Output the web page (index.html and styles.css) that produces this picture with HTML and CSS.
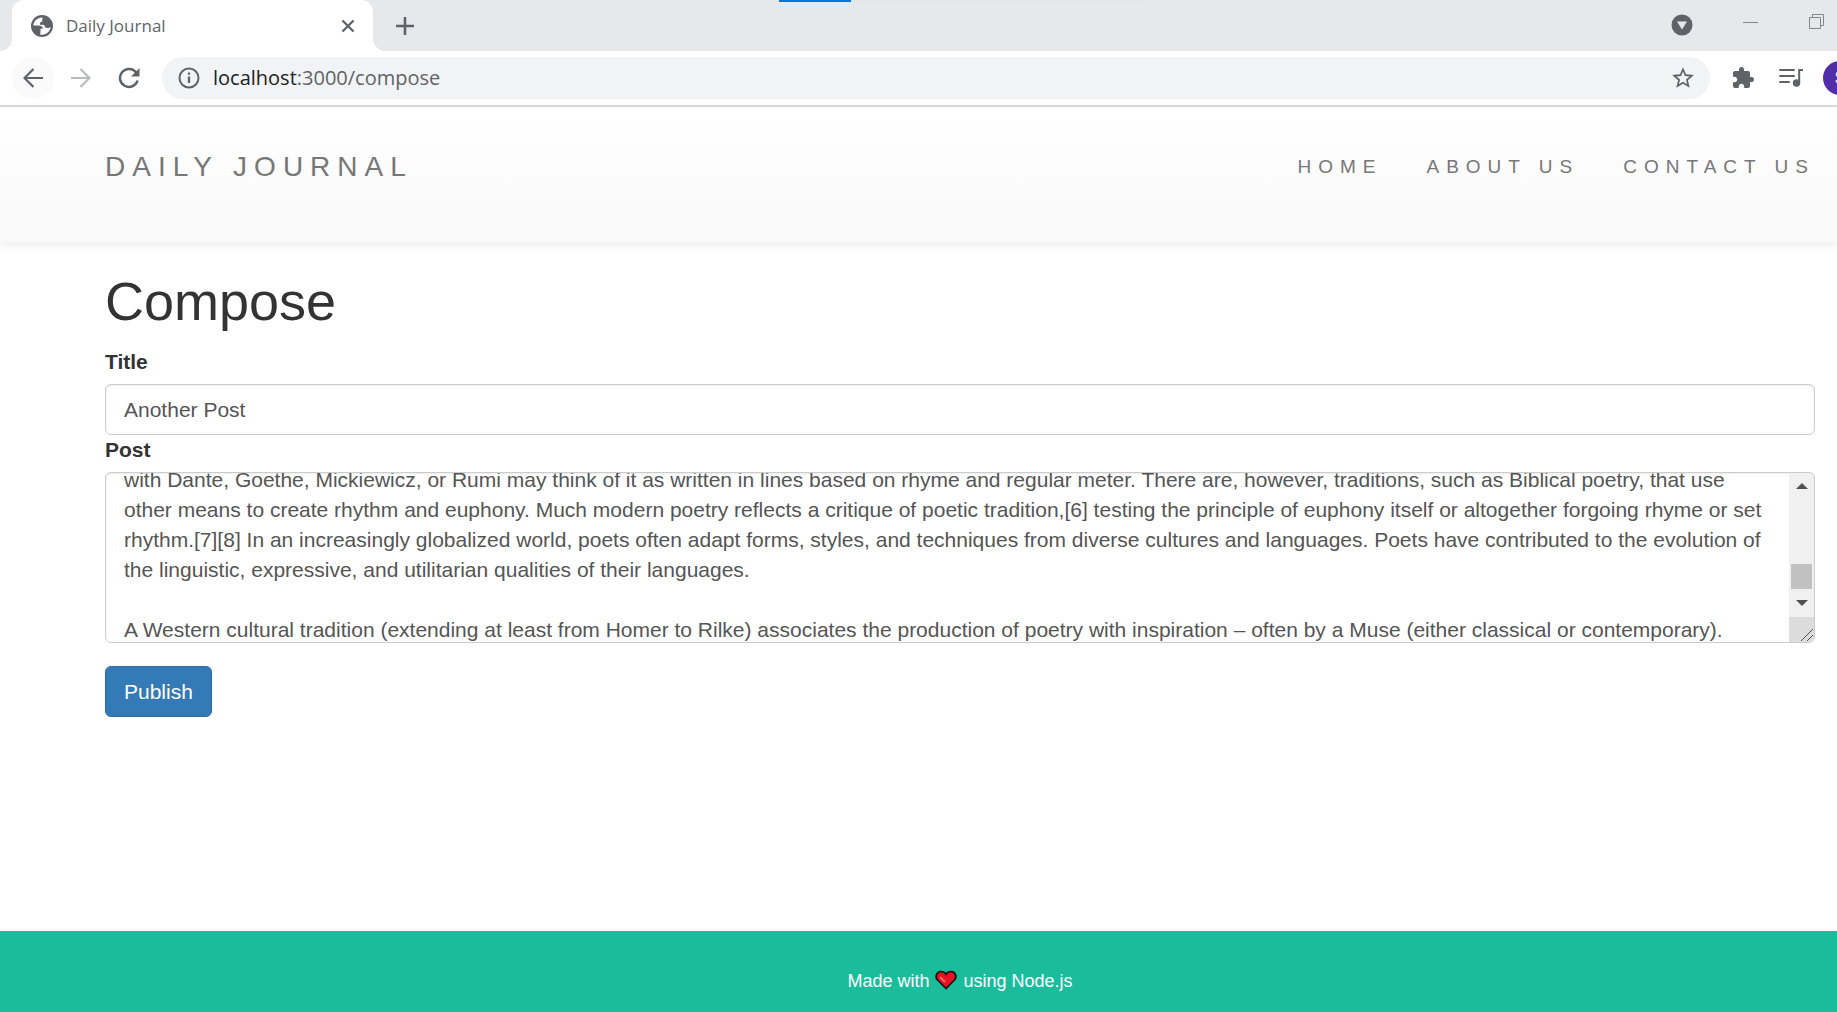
FILE: index.html
```html
<!DOCTYPE html>
<html lang="en">
<head>
<meta charset="utf-8">
<meta name="viewport" content="width=device-width, initial-scale=1">
<title>Daily Journal</title>
<link rel="stylesheet" href="styles.css">
</head>
<body>
<div class="window">
  <div class="tab-strip">
    <div class="load-bar"></div>
    <div class="tab">
      <svg class="globe" viewBox="0 0 22 22" width="22" height="22" aria-hidden="true"><circle cx="11" cy="11" r="11" fill="#5f6368"/><path d="M11.500 2.400C6.500 2.200 2.600 6 2.400 10.400l5.100.1c2.500 0 4.300 1.200 4.500 3.300H9.500v3.300l-.4 2.300c5 1.200 9.900-2 10.500-7.400-1 .9-2.200 1-3.300.9-2-.1-2.800-1.400-2.900-3L9 9.700C8.600 7.900 9.400 6.700 11.200 6.400z" fill="#fff"/></svg>
      <span class="tab-title">Daily Journal</span>
      <button class="icon-btn" type="button" aria-label="Close tab"><svg viewBox="0 0 14 14" width="14" height="14"><path d="M1.500 1.500l11 11M12.500 1.500l-11 11" stroke="#5f6368" stroke-width="2.300"/></svg></button>
    </div>
    <button class="icon-btn new-tab" type="button" aria-label="New tab"><svg viewBox="0 0 18 18" width="18" height="18"><path d="M9 0v18M0 9h18" stroke="#5f6368" stroke-width="2.600"/></svg></button>
    <div class="window-controls">
      <button class="icon-btn tab-search" type="button" aria-label="Search tabs"><svg viewBox="0 0 22 22" width="22" height="22"><circle cx="11" cy="11" r="10.500" fill="#5f6368"/><path d="M6 7.500h10l-5 8z" fill="#e5e9ec"/></svg></button>
      <button class="icon-btn" type="button" aria-label="Minimize"><svg viewBox="0 0 16 16" width="16" height="16"><path d="M0 8.500h15" stroke="#85888a"/></svg></button>
      <button class="icon-btn" type="button" aria-label="Restore"><svg viewBox="0 0 16 16" width="16" height="16"><path d="M.5 3.500h11v11H.500zM3.500 3.500v-3h11v11h-3" fill="none" stroke="#85888a"/></svg></button>
    </div>
  </div>

  <div class="toolbar">
    <button class="icon-btn nav-btn back" type="button" aria-label="Back"><svg viewBox="0 0 20 20" width="20" height="20"><path d="M20 10H2M10.500 1L1.500 10l9 9" fill="none" stroke="#5f6368" stroke-width="2.200"/></svg></button>
    <button class="icon-btn nav-btn" type="button" aria-label="Forward"><svg viewBox="0 0 20 20" width="20" height="20"><path d="M0 10h18M9.500 1l9 9-9 9" fill="none" stroke="#babcbe" stroke-width="2.200"/></svg></button>
    <button class="icon-btn nav-btn" type="button" aria-label="Reload"><svg viewBox="0 0 22 22" width="22" height="22"><path d="M18.200 5.500A9 9 0 1 0 19.600 13.500" fill="none" stroke="#5f6368" stroke-width="2.500"/><path d="M21.500 1v8.500H13z" fill="#5f6368"/></svg></button>
    <div class="address">
      <svg viewBox="0 0 22 22" width="22" height="22" aria-hidden="true"><circle cx="11" cy="11" r="9.500" fill="none" stroke="#5f6368" stroke-width="2"/><path d="M11 9.500V16M11 5.500v2.300" stroke="#5f6368" stroke-width="2.300"/></svg>
      <span class="url"><span class="host">localhost</span>:3000/compose</span>
      <button class="icon-btn" type="button" aria-label="Bookmark this page"><svg viewBox="0 0 24 24" width="26" height="26"><path d="M22 9.240l-7.190-.62L12 2 9.190 8.630 2 9.240l5.460 4.730L5.820 21 12 17.270 18.180 21l-1.630-7.030L22 9.240zM12 15.400l-3.760 2.270 1-4.280-3.320-2.880 4.380-.38L12 6.100l1.710 4.040 4.380.38-3.320 2.880 1 4.280L12 15.400z" fill="#5f6368"/></svg></button>
    </div>
    <button class="icon-btn" type="button" aria-label="Extensions"><svg viewBox="0 0 24 24" width="24" height="24"><path d="M20.500 11H19V7c0-1.100-.9-2-2-2h-4V3.500a2.500 2.500 0 0 0-5 0V5H4c-1.100 0-1.990.9-1.990 2v3.800H3.500c1.490 0 2.700 1.210 2.700 2.700s-1.210 2.700-2.700 2.700H2V20c0 1.100.9 2 2 2h3.800v-1.500c0-1.490 1.210-2.700 2.700-2.700s2.700 1.210 2.700 2.700V22H17c1.100 0 2-.9 2-2v-4h1.500a2.500 2.500 0 0 0 0-5z" fill="#5f6368"/></svg></button>
    <button class="icon-btn" type="button" aria-label="Media controls"><svg viewBox="0 0 25 20" width="25" height="20"><path d="M1 2h14M1 8h14M1 14h9" stroke="#5f6368" stroke-width="2" stroke-linecap="round"/><circle cx="17.500" cy="15" r="3.700" fill="#5f6368"/><path d="M20.200 15V2H24" fill="none" stroke="#5f6368" stroke-width="2"/></svg></button>
    <button class="avatar" type="button" aria-label="Profile">S</button>
  </div>

  <header class="site-header">
    <a class="brand" href="#">DAILY JOURNAL</a>
    <nav class="site-nav">
      <a href="#">HOME</a>
      <a href="#">ABOUT US</a>
      <a href="#">CONTACT US</a>
    </nav>
  </header>

  <main class="content">
    <h1>Compose</h1>
    <form class="compose">
      <label for="post-title">Title</label>
      <input class="field" id="post-title" type="text" value="Another Post">
      <label for="post-body">Post</label>
      <div class="post-box">
        <textarea class="field post-body" id="post-body" spellcheck="false">with Dante, Goethe, Mickiewicz, or Rumi may think of it as written in lines based on rhyme and regular meter. There are, however, traditions, such as Biblical poetry, that use other means to create rhythm and euphony. Much modern poetry reflects a critique of poetic tradition,[6] testing the principle of euphony itself or altogether forgoing rhyme or set rhythm.[7][8] In an increasingly globalized world, poets often adapt forms, styles, and techniques from diverse cultures and languages. Poets have contributed to the evolution of the linguistic, expressive, and utilitarian qualities of their languages.

A Western cultural tradition (extending at least from Homer to Rilke) associates the production of poetry with inspiration – often by a Muse (either classical or contemporary).</textarea>
        <div class="scrollbar" aria-hidden="true">
          <svg viewBox="0 0 12 6" width="12" height="6"><path d="M0 6l6-6 6 6z" fill="#505050"/></svg>
          <span class="thumb"></span>
          <svg viewBox="0 0 12 6" width="12" height="6"><path d="M0 0l6 6 6-6z" fill="#505050"/></svg>
          <svg class="grip" viewBox="0 0 25 25" width="25" height="25"><path d="M0 0h25v25H0z" fill="#dcdcdc"/><path d="M12 24l12-12M18 24l6-6" stroke="#505050"/></svg>
        </div>
      </div>
      <button class="publish" type="button">Publish</button>
    </form>
  </main>

  <footer class="site-footer">
    <p>Made with
      <svg class="heart" viewBox="0 0 22 20" width="22" height="20" role="img" aria-label="love"><path d="M11 18.500L2.500 10C-.5 6.500 2 1.500 6 1.500c2.200 0 4 1 5 2.800 1-1.800 2.800-2.800 5-2.800 4 0 6.500 5 3.500 8.500z" fill="#e81123" stroke="#111" stroke-width="1.700"/><path d="M5 7l5 5" stroke="#f4705f" stroke-width="2"/></svg>
      using Node.js</p>
  </footer>
</div>
<script src="script.js"></script>
</body>
</html>
```
FILE: styles.css
```css
* {
  box-sizing: border-box;
}

body {
  margin: 0;
  background: #fff;
  color: #333;
  font: 21px/30px "Liberation Sans", Arial, sans-serif;
}

button,
input,
textarea {
  font: inherit;
}

.window {
  display: flex;
  flex-direction: column;
  min-height: 100vh;
  overflow: hidden;
}

.icon-btn {
  display: flex;
  flex: none;
  align-items: center;
  justify-content: center;
  padding: 0;
  border: 0;
  background: none;
}

/* Tab strip */
.tab-strip {
  position: relative;
  display: flex;
  height: 51px;
  padding: 0 12px;
  background: #e5e9ec;
}

.load-bar {
  position: absolute;
  top: 0;
  left: 779px;
  width: 362px;
  height: 2px;
  background: linear-gradient(90deg, #0078d7 72px, #e5e5e5 72px);
}

.tab {
  position: relative;
  display: flex;
  align-items: center;
  width: 361px;
  padding: 0 18px 0 19px;
  border-radius: 12px 12px 0 0;
  background: #fff;
}

.tab::before,
.tab::after {
  content: "";
  position: absolute;
  bottom: 0;
  width: 12px;
  height: 12px;
}

.tab::before {
  right: 100%;
  background: radial-gradient(circle at 0 0, transparent 12px, #fff 12px);
}

.tab::after {
  left: 100%;
  background: radial-gradient(circle at 100% 0, transparent 12px, #fff 12px);
}

.tab-title {
  flex: 1;
  margin-left: 13px;
  color: #5f6368;
  font: 17px/24px "Open Sans", "Noto Sans", sans-serif;
}

.new-tab {
  margin-left: 23px;
}

.window-controls {
  display: flex;
  align-items: center;
  margin-left: auto;
  padding-bottom: 8px;
  gap: 50px;
}

.tab-search {
  margin-top: 7px;
}

/* Toolbar */
.toolbar {
  display: flex;
  align-items: center;
  height: 56px;
  padding-left: 12px;
  border-bottom: 2px solid #dadce0;
  background: #fff;
}

.nav-btn {
  width: 42px;
  height: 42px;
  margin-right: 6px;
  border-radius: 50%;
}

.back {
  background: #fafafa;
}

.address {
  display: flex;
  flex: 1;
  align-items: center;
  height: 42px;
  margin-right: 21px;
  margin-left: 6px;
  padding: 0 14px 0 16px;
  border-radius: 21px;
  background: #f1f3f4;
}

.url {
  flex: 1;
  margin-left: 13px;
  color: #5f6368;
  font: 20px/30px "Open Sans", "Noto Sans", sans-serif;
}

.host {
  color: #202124;
}

.toolbar > .icon-btn + .icon-btn:not(.nav-btn) {
  margin-left: 24px;
}

.avatar {
  flex: none;
  width: 34px;
  height: 34px;
  margin-right: -20px;
  margin-left: 19px;
  padding: 0;
  border: 0;
  border-radius: 50%;
  background: #512da8;
  color: #fff;
  font: 18px/34px Roboto, sans-serif;
}

/* Site header */
.site-header {
  display: flex;
  align-items: flex-start;
  justify-content: space-between;
  height: 136px;
  padding: 45px 22px 0 105px;
  background: linear-gradient(#fff, #f8f8f8);
  box-shadow: 0 2px 8px rgba(0, 0, 0, 0.08);
}

.site-header a {
  color: #777;
  text-decoration: none;
}

.brand {
  font-size: 28px;
  letter-spacing: 7px;
}

.site-nav {
  display: flex;
  gap: 44px;
  font-size: 19px;
  letter-spacing: 7px;
}

/* Compose form */
.content {
  flex: 1;
  padding: 29px 22px 0 105px;
}

h1 {
  margin: 0 0 16px;
  font-size: 54px;
  font-weight: 500;
  line-height: 59px;
}

.compose label {
  display: block;
  margin-bottom: 7px;
  font-weight: 700;
}

.field {
  display: block;
  width: 100%;
  height: 51px;
  padding: 9px 18px;
  border: 1px solid #ccc;
  border-radius: 6px;
  background: #fff;
  box-shadow: inset 0 1px 2px rgba(0, 0, 0, 0.08);
  color: #555;
}

.post-box {
  position: relative;
}

.post-body {
  height: 171px;
  padding-right: 43px;
  overflow: hidden;
  resize: none;
}

.scrollbar {
  position: absolute;
  top: 2px;
  right: 1px;
  bottom: 1px;
  display: flex;
  flex-direction: column;
  align-items: center;
  width: 25px;
  padding-top: 9px;
  border-radius: 0 5px 5px 0;
  background: #f0f0f0;
  overflow: hidden;
}

.thumb {
  width: 21px;
  height: 25px;
  margin: 75px 0 11px;
  background: #c1c1c1;
}

.grip {
  margin-top: auto;
}

.publish {
  margin-top: 23px;
  padding: 9px 18px;
  border: 1px solid #2e6da4;
  border-radius: 6px;
  background: #337ab7;
  color: #fff;
  line-height: 31px;
}

/* Footer */
.site-footer {
  height: 81px;
  padding: 35px 22px 0 105px;
  background: #1abc9c;
  color: #fff;
  font-size: 18px;
  text-align: center;
}

.site-footer p {
  margin: 0;
}

.heart {
  margin: 0 1px;
  vertical-align: -3px;
}
```
FILE: script.js
```js
// Open the post scrolled a little way down, part-way through its first line.
document.getElementById("post-body").scrollTop = 17;
```
